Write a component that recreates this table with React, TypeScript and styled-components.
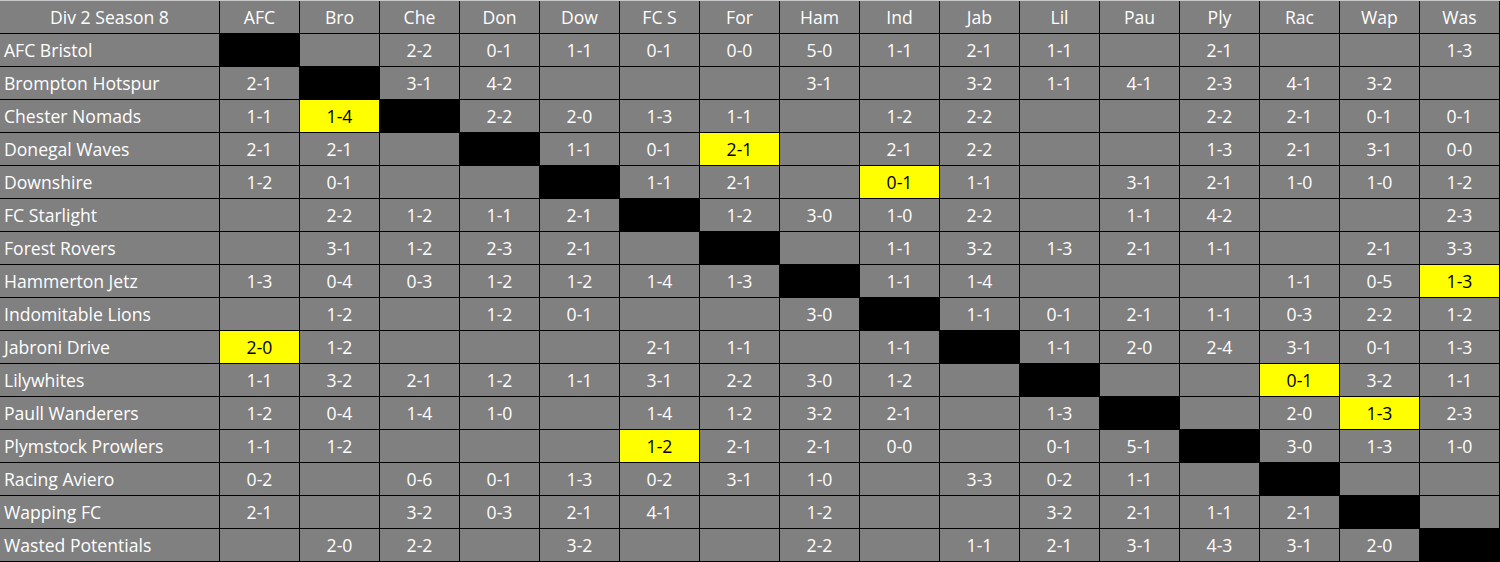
import React from "react";
import styled, { createGlobalStyle } from "styled-components";

const GlobalStyle = createGlobalStyle`
  html, body {
    margin: 0;
    padding: 0;
    background: #808080;
  }
  body {
    font-family: "Open Sans", "Liberation Sans", sans-serif;
  }
`;

const Sheet = styled.div`
  width: 1500px;
  display: grid;
  grid-template-columns: 219px repeat(16, 79px) 1px;
  grid-auto-rows: 32px;
  column-gap: 1px;
  row-gap: 1px;
  background-color: #000;
  border-top: 1px solid #c8c8c8;
  border-bottom: 1px solid #000;
`;

const Cell = styled.div<{ $kind?: "blank" | "self" | "hit"; $left?: boolean }>`
  background-color: ${(p) =>
    p.$kind === "self" ? "#000" : p.$kind === "hit" ? "#ffff00" : "#808080"};
  color: ${(p) => (p.$kind === "hit" ? "#000" : "#fff")};
  font-size: 17.6px;
  line-height: 33px;
  text-align: ${(p) => (p.$left ? "left" : "center")};
  padding-left: ${(p) => (p.$left ? "4px" : "0")};
  white-space: nowrap;
  overflow: hidden;
`;

const Edge = styled.div`
  background-color: #808080;
`;

const headers = [
  "AFC",
  "Bro",
  "Che",
  "Don",
  "Dow",
  "FC S",
  "For",
  "Ham",
  "Ind",
  "Jab",
  "Lil",
  "Pau",
  "Ply",
  "Rac",
  "Wap",
  "Was",
];

// "*" marks a highlighted result
const rows: [string, string[]][] = [
  ["AFC Bristol", ["X", "", "2-2", "0-1", "1-1", "0-1", "0-0", "5-0", "1-1", "2-1", "1-1", "", "2-1", "", "", "1-3"]],
  ["Brompton Hotspur", ["2-1", "X", "3-1", "4-2", "", "", "", "3-1", "", "3-2", "1-1", "4-1", "2-3", "4-1", "3-2", ""]],
  ["Chester Nomads", ["1-1", "*1-4", "X", "2-2", "2-0", "1-3", "1-1", "", "1-2", "2-2", "", "", "2-2", "2-1", "0-1", "0-1"]],
  ["Donegal Waves", ["2-1", "2-1", "", "X", "1-1", "0-1", "*2-1", "", "2-1", "2-2", "", "", "1-3", "2-1", "3-1", "0-0"]],
  ["Downshire", ["1-2", "0-1", "", "", "X", "1-1", "2-1", "", "*0-1", "1-1", "", "3-1", "2-1", "1-0", "1-0", "1-2"]],
  ["FC Starlight", ["", "2-2", "1-2", "1-1", "2-1", "X", "1-2", "3-0", "1-0", "2-2", "", "1-1", "4-2", "", "", "2-3"]],
  ["Forest Rovers", ["", "3-1", "1-2", "2-3", "2-1", "", "X", "", "1-1", "3-2", "1-3", "2-1", "1-1", "", "2-1", "3-3"]],
  ["Hammerton Jetz", ["1-3", "0-4", "0-3", "1-2", "1-2", "1-4", "1-3", "X", "1-1", "1-4", "", "", "", "1-1", "0-5", "*1-3"]],
  ["Indomitable Lions", ["", "1-2", "", "1-2", "0-1", "", "", "3-0", "X", "1-1", "0-1", "2-1", "1-1", "0-3", "2-2", "1-2"]],
  ["Jabroni Drive", ["*2-0", "1-2", "", "", "", "2-1", "1-1", "", "1-1", "X", "1-1", "2-0", "2-4", "3-1", "0-1", "1-3"]],
  ["Lilywhites", ["1-1", "3-2", "2-1", "1-2", "1-1", "3-1", "2-2", "3-0", "1-2", "", "X", "", "", "*0-1", "3-2", "1-1"]],
  ["Paull Wanderers", ["1-2", "0-4", "1-4", "1-0", "", "1-4", "1-2", "3-2", "2-1", "", "1-3", "X", "", "2-0", "*1-3", "2-3"]],
  ["Plymstock Prowlers", ["1-1", "1-2", "", "", "", "*1-2", "2-1", "2-1", "0-0", "", "0-1", "5-1", "X", "3-0", "1-3", "1-0"]],
  ["Racing Aviero", ["0-2", "", "0-6", "0-1", "1-3", "0-2", "3-1", "1-0", "", "3-3", "0-2", "1-1", "", "X", "", ""]],
  ["Wapping FC", ["2-1", "", "3-2", "0-3", "2-1", "4-1", "", "1-2", "", "", "3-2", "2-1", "1-1", "2-1", "X", ""]],
  ["Wasted Potentials", ["", "2-0", "2-2", "", "3-2", "", "", "2-2", "", "1-1", "2-1", "3-1", "4-3", "3-1", "2-0", "X"]],
];

const ResultCell: React.FC<{ value: string }> = ({ value }) => {
  if (value === "X") return <Cell $kind="self" />;
  if (value.startsWith("*")) return <Cell $kind="hit">{value.slice(1)}</Cell>;
  return <Cell>{value}</Cell>;
};

export default function App() {
  return (
    <>
      <GlobalStyle />
      <Sheet>
        <Cell>Div 2 Season 8</Cell>
        {headers.map((h) => (
          <Cell key={h}>{h}</Cell>
        ))}
        <Edge />
        {rows.map(([team, results]) => (
          <React.Fragment key={team}>
            <Cell $left>{team}</Cell>
            {results.map((r, i) => (
              <ResultCell key={i} value={r} />
            ))}
            <Edge />
          </React.Fragment>
        ))}
      </Sheet>
    </>
  );
}
